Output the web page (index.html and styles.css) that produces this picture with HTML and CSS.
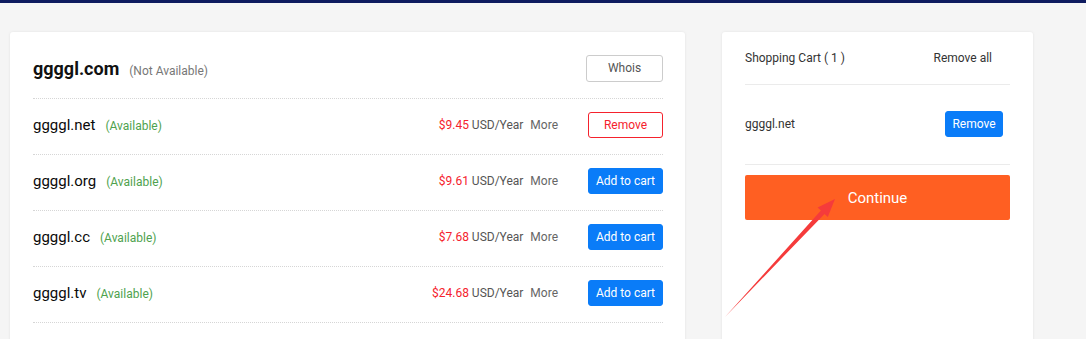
FILE: index.html
```html
<!DOCTYPE html>
<html lang="en">

<head>
    <meta charset="UTF-8">
    <meta name="viewport" content="width=device-width, initial-scale=1.0">
    <title>Domain search</title>
    <link rel="stylesheet" href="styles.css">
</head>

<body>
    <div class="top-bar"></div>

    <div class="page">
        <!-- search results -->
        <div class="card results">
            <div class="row head">
                <div class="name">
                    <span class="domain big">ggggl.com</span>
                    <span class="status gray">(Not Available)</span>
                </div>
                <button class="btn whois">Whois</button>
            </div>

            <div class="row">
                <div class="name">
                    <span class="domain">ggggl.net</span>
                    <span class="status green">(Available)</span>
                </div>
                <div class="price"><span class="amount">$9.45</span> USD/Year <a class="more">More</a></div>
                <button class="btn remove">Remove</button>
            </div>

            <div class="row">
                <div class="name">
                    <span class="domain">ggggl.org</span>
                    <span class="status green">(Available)</span>
                </div>
                <div class="price"><span class="amount">$9.61</span> USD/Year <a class="more">More</a></div>
                <button class="btn add">Add to cart</button>
            </div>

            <div class="row">
                <div class="name">
                    <span class="domain">ggggl.cc</span>
                    <span class="status green">(Available)</span>
                </div>
                <div class="price"><span class="amount">$7.68</span> USD/Year <a class="more">More</a></div>
                <button class="btn add">Add to cart</button>
            </div>

            <div class="row">
                <div class="name">
                    <span class="domain">ggggl.tv</span>
                    <span class="status green">(Available)</span>
                </div>
                <div class="price"><span class="amount">$24.68</span> USD/Year <a class="more">More</a></div>
                <button class="btn add">Add to cart</button>
            </div>
        </div>

        <!-- cart -->
        <div class="card cart">
            <div class="cart-head">
                <span>Shopping Cart ( 1 )</span>
                <a class="remove-all">Remove all</a>
            </div>
            <div class="cart-item">
                <span>ggggl.net</span>
                <button class="btn small-remove">Remove</button>
            </div>
            <button class="continue">Continue</button>
        </div>
    </div>

    <!-- red annotation arrow -->
    <svg class="arrow" width="1086" height="339" viewBox="0 0 1086 339">
        <polygon points="725,317 820.9,210.5 817.6,207.4 835,199 827.8,217 824.5,213.9" fill="#f53b3b" />
    </svg>
</body>

</html>
```

FILE: styles.css
```css
body {
    margin: 0;
    background: #f5f5f5;
    font-family: Roboto, 'Liberation Sans', Arial, sans-serif;
    color: #333;
    height: 339px;
    overflow: hidden;
}

.top-bar {
    height: 3px;
    background: #0e1b5f;
}

.page {
    display: flex;
    align-items: flex-start;
    gap: 37px;
    padding: 29px 0 0 10px;
}

.card {
    background: #fff;
    border-radius: 3px;
    box-shadow: 0 0 3px rgba(0, 0, 0, .08);
}

.results {
    width: 630px;
    padding: 0 22px 40px 23px;
}

.row {
    display: flex;
    align-items: center;
    box-sizing: border-box;
    height: 56px;
    padding-bottom: 3px;
    border-bottom: 1px dotted #d6d6d6;
}

.row.head {
    height: 67px;
    padding: 6px 0 0;
}

.name {
    flex: 1;
    display: flex;
    align-items: baseline;
    gap: 10px;
}

.domain {
    font-size: 15px;
    font-weight: 400;
    color: #0a0a0a;
}

.domain.big {
    font-size: 18px;
    font-weight: 700;
    color: #111;
}

.status {
    font-size: 12px;
}

.gray {
    color: #777;
}

.green {
    color: #4ea24e;
}

.price {
    font-size: 12px;
    color: #555;
    margin-right: 30px;
}

.amount {
    color: #f5222d;
}

.more {
    color: #666;
    margin-left: 4px;
}

.btn {
    font-family: inherit;
    font-size: 12px;
    height: 26px;
    width: 75px;
    border-radius: 3px;
    cursor: pointer;
    padding: 0;
}

.whois {
    width: 77px;
    height: 27px;
    background: #fff;
    border: 1px solid #ccc;
    color: #555;
}

.remove {
    background: #fff;
    border: 1px solid #f5222d;
    color: #f5222d;
}

.add {
    background: #0a7cf8;
    border: 1px solid #0a7cf8;
    color: #fff;
}

.cart {
    width: 265px;
    height: 340px;
    padding: 0 23px;
}

.cart-head {
    display: flex;
    justify-content: space-between;
    align-items: center;
    height: 52px;
    padding: 0 18px 0 0;
    border-bottom: 1px solid #ebebeb;
    font-size: 12px;
    color: #333;
}

.remove-all {
    color: #333;
}

.cart-item {
    display: flex;
    justify-content: space-between;
    align-items: center;
    box-sizing: border-box;
    height: 80px;
    padding: 0 7px 1px 0;
    border-bottom: 1px solid #ebebeb;
    font-size: 12px;
    color: #333;
}

.small-remove {
    width: 58px;
    background: #0a7cf8;
    border: 1px solid #0a7cf8;
    color: #fff;
}

.continue {
    display: block;
    width: 100%;
    height: 45px;
    margin-top: 10px;
    border: none;
    border-radius: 2px;
    background: #ff5f22;
    color: #fff;
    font-family: inherit;
    font-size: 15px;
    cursor: pointer;
}

.arrow {
    position: absolute;
    left: 0;
    top: 0;
    pointer-events: none;
}
```
